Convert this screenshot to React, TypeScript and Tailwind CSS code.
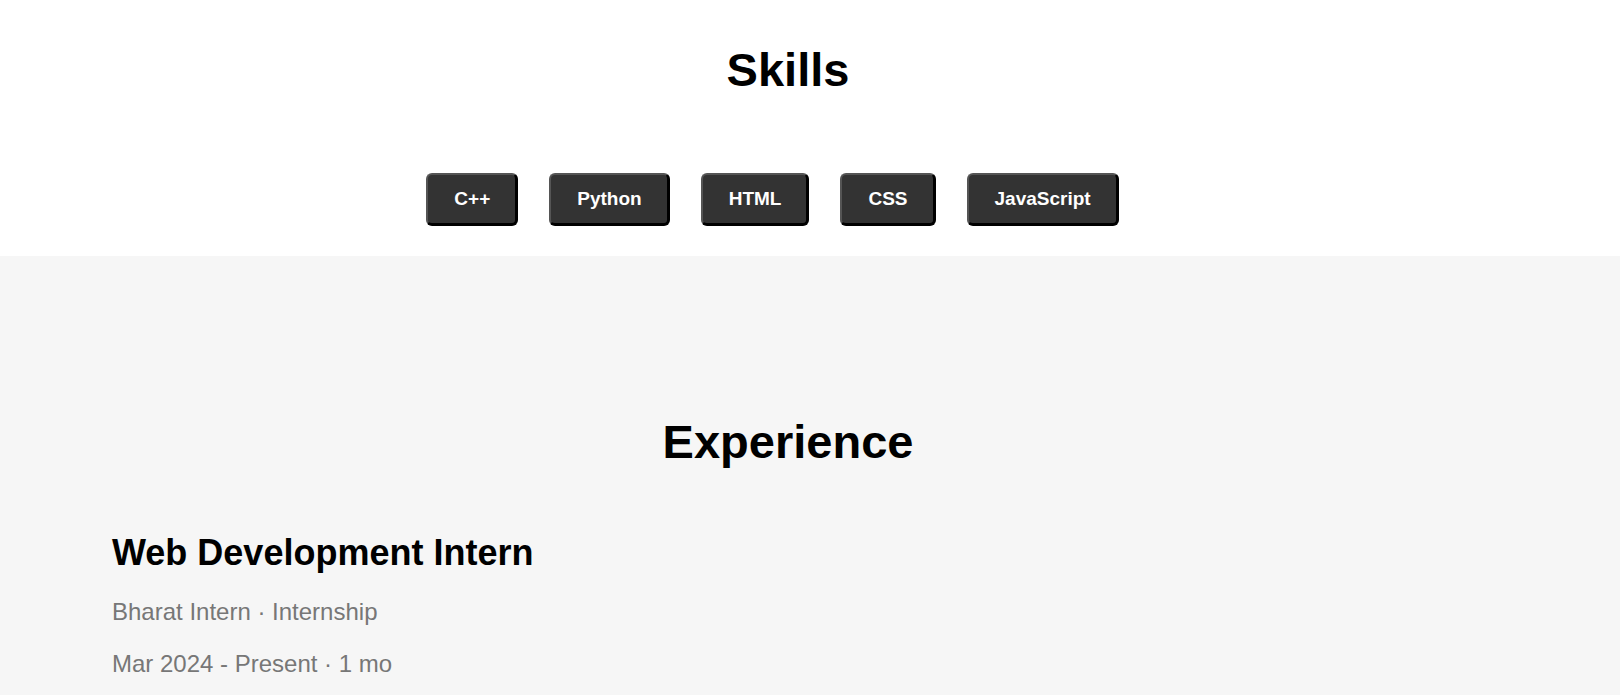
import React from "react";

const skills = ["C++", "Python", "HTML", "CSS", "JavaScript"];

export default function App() {
  return (
    <div className="w-[1620px] font-['Liberation_Sans',Arial,sans-serif] text-black">
      <section className="bg-white h-[256px]">
        <div className="w-[1576px] flex flex-col items-center">
          <h2 className="mt-[43px] text-[47px] leading-[54px] font-bold">Skills</h2>
          <div className="mt-[76px] flex justify-center gap-[31px] pr-[31px] w-full">
            {skills.map((s) => (
              <button
                key={s}
                className="bg-[#333] text-white font-bold text-[19px] leading-[22px] pl-[26px] pr-[25px] pt-[13px] pb-[13px] rounded-[6px] border-t-2 border-l-2 border-r-[3px] border-b-[3px] border-t-[#555] border-l-[#555] border-r-black border-b-black"
              >
                {s}
              </button>
            ))}
          </div>
        </div>
      </section>
      <section className="bg-[#f6f6f6] h-[439px]">
        <div className="w-[1576px] pl-[112px] flex flex-col">
          <h2 className="mt-[159px] pr-[112px] text-center text-[47px] leading-[54px] font-bold">Experience</h2>
          <h3 className="mt-[63px] text-[36px] leading-[41px] font-bold">Web Development Intern</h3>
          <p className="mt-[25px] text-[24px] leading-[28px] text-[#777]">Bharat Intern · Internship</p>
          <p className="mt-[24px] text-[24px] leading-[28px] text-[#777]">Mar 2024 - Present · 1 mo</p>
        </div>
      </section>
    </div>
  );
}
